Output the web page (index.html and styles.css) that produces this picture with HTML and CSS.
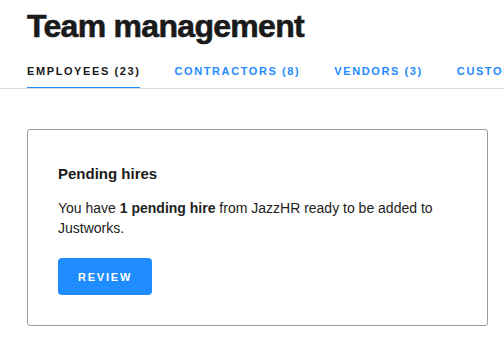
FILE: index.html
```html
<!DOCTYPE html>
<html lang="en">
<head>
    <meta charset="UTF-8">
    <meta name="viewport" content="width=device-width, initial-scale=1.0">
    <title>Team management</title>
    <link rel="stylesheet" href="styles.css">
</head>
<body>
    <header class="page-header">
        <h1>Team management</h1>
    </header>

    <nav class="tabs">
        <a href="#" class="tab active">Employees (23)</a>
        <a href="#" class="tab">Contractors (8)</a>
        <a href="#" class="tab">Vendors (3)</a>
        <a href="#" class="tab">Customers (2)</a>
    </nav>

    <section class="card">
        <h2>Pending hires</h2>
        <p>You have <strong>1 pending hire</strong> from JazzHR ready to be added to Justworks.</p>
        <button type="button">Review</button>
    </section>
</body>
</html>
```

FILE: styles.css
```css
/* Team management page */
body {
    font-family: "Liberation Sans", Arial, sans-serif;
    margin: 0;
    background-color: #fff;
    color: #1a1a1a;
    overflow: hidden;
}
.page-header {
    padding: 6px 27px 0;
}
h1 {
    margin: 0;
    font-size: 32px;
    line-height: 40px;
    font-weight: bold;
    letter-spacing: -0.7px;
    color: #1a1a1a;
    -webkit-text-stroke: 0.6px #1a1a1a;
}
.tabs {
    display: flex;
    gap: 34px;
    margin-top: 16px;
    padding: 0 27px;
    border-bottom: 1px solid #d9d9de;
    white-space: nowrap;
    overflow: hidden;
}
.tab {
    display: block;
    flex-shrink: 0;
    padding: 1px 0 8px;
    margin-bottom: -1px;
    font-size: 11px;
    line-height: 16px;
    font-weight: bold;
    letter-spacing: 1.6px;
    text-transform: uppercase;
    text-decoration: none;
    color: #1f8cff;
    border-bottom: 2px solid transparent;
}
.tab.active {
    color: #1a1a1a;
    border-bottom-color: #1f8cff;
}
.card {
    width: 400px;
    margin: 40px 0 0 27px;
    padding: 34px 29px 30px 30px;
    border: 1px solid #9b9ba3;
    border-radius: 3px;
}
h2 {
    margin: 0;
    font-size: 15px;
    line-height: 20px;
    font-weight: bold;
}
p {
    margin: 14px 0 20px;
    font-size: 14px;
    line-height: 20px;
    color: #222;
}
button {
    width: 94px;
    height: 37px;
    padding: 0;
    border: none;
    border-radius: 4px;
    background-color: #1f8cff;
    color: #fff;
    font-family: inherit;
    font-size: 11px;
    font-weight: bold;
    letter-spacing: 1.8px;
    text-transform: uppercase;
    cursor: pointer;
}
```
